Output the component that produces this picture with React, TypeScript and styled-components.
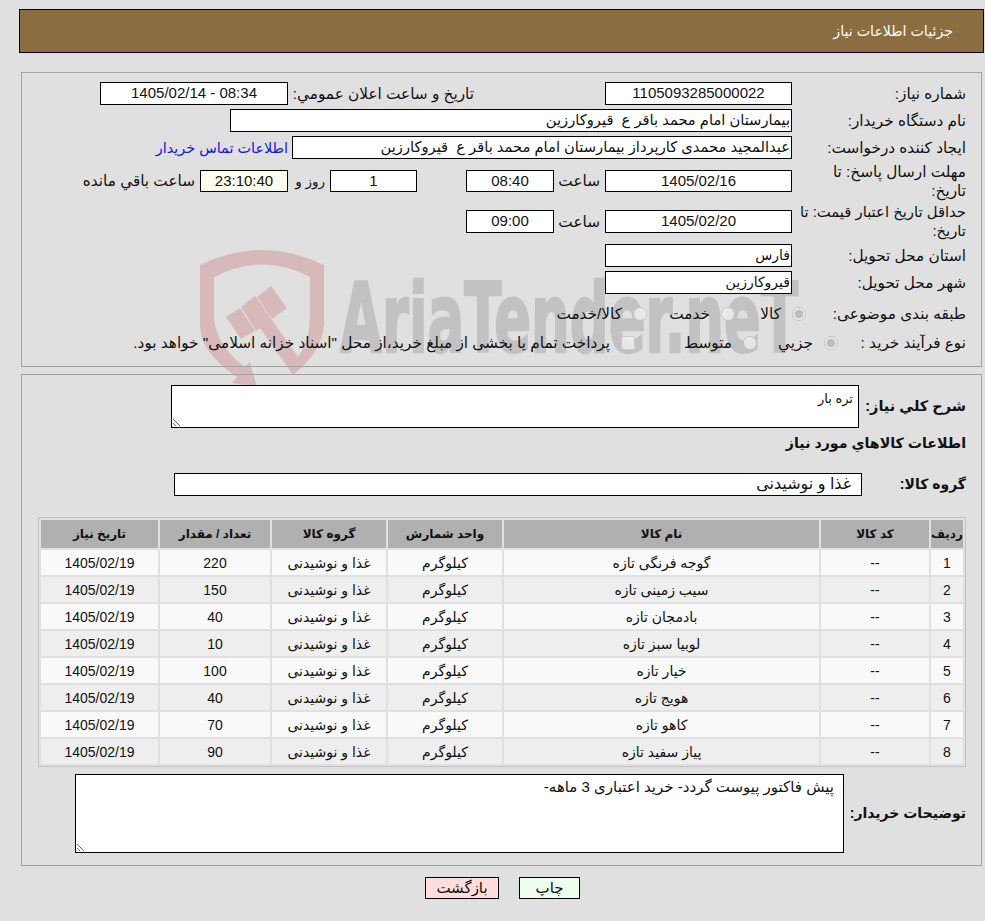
import React from "react";
import styled, { createGlobalStyle } from "styled-components";

const FONT = `"Liberation Sans", "DejaVu Sans", sans-serif`;

const Global = createGlobalStyle`
  html, body { margin: 0; padding: 0; background: #e0e0e0; }
  body { font-family: ${FONT}; font-size: 15.3px; color: #111; overflow: hidden; }
`;

const Page = styled.div`
  position: relative;
  direction: rtl;
  width: 985px;
  height: 921px;
  box-sizing: border-box;
  padding: 9px 1px 0 19px;
`;

const Watermark = styled.svg`
  position: absolute;
  left: 190px;
  top: 240px;
  width: 640px;
  height: 150px;
  z-index: 0;
  direction: ltr;
`;

const Layer = styled.div`
  position: relative;
  z-index: 1;
`;

const Header = styled.header`
  height: 44px;
  box-sizing: border-box;
  border: 1px solid #000;
  background: #8c6d42;
  color: #fff;
  display: flex;
  align-items: center;
  padding-right: 30px;
  font-size: 14.2px;
`;

const Panel = styled.section<{ $top: number }>`
  margin: ${(p) => p.$top}px 2px 0;
  border: 1px solid #a3a3a3;
  padding: ${(p) => (p.$top > 10 ? 9 : 10)}px 0 12px;
`;

const Row = styled.div<{ $h?: number; $gap?: number }>`
  display: flex;
  align-items: center;
  height: ${(p) => p.$h ?? 23}px;
  margin-top: ${(p) => p.$gap ?? 0}px;
`;

const Label = styled.div<{ $w?: number; $size?: number }>`
  flex: none;
  box-sizing: border-box;
  width: ${(p) => p.$w ?? 189}px;
  padding-right: 15px;
  font-size: ${(p) => p.$size ?? 15.3}px;
  line-height: 19px;
  white-space: nowrap;
`;

const BoldLabel = styled(Label)`
  font-size: ${(p) => p.$size ?? 14}px;
  font-weight: 700;
`;

const Field = styled.div<{ $w: number; $center?: boolean; $tint?: boolean; $size?: number }>`
  flex: none;
  box-sizing: border-box;
  width: ${(p) => p.$w}px;
  height: 100%;
  border: 1px solid #000;
  background: ${(p) => (p.$tint ? "#ffffee" : "#fff")};
  font-size: ${(p) => p.$size ?? 14.7}px;
  text-align: ${(p) => (p.$center ? "center" : "right")};
  padding: 0 1px;
  line-height: 20px;
  white-space: pre;
  overflow: hidden;
`;

const Num = styled.span`
  font-size: 15px;
`;

const Side = styled.div<{ $w?: number; $pad?: number; $size?: number }>`
  flex: none;
  box-sizing: border-box;
  width: ${(p) => (p.$w ? `${p.$w}px` : "auto")};
  padding-right: ${(p) => p.$pad ?? 0}px;
  font-size: ${(p) => p.$size ?? 15.3}px;
  white-space: nowrap;
`;

const Link = styled.a`
  color: #1212ee;
  font-size: 14.4px;
  text-decoration: none;
  margin-right: 4px;
  white-space: nowrap;
`;

const Option = styled.label<{ $w: number }>`
  flex: none;
  width: ${(p) => p.$w}px;
  display: flex;
  align-items: center;
  gap: 11px;
  white-space: nowrap;
`;

const Radio = styled.span<{ $on?: boolean }>`
  flex: none;
  box-sizing: border-box;
  width: 14px;
  height: 14px;
  border-radius: 50%;
  border: 1px solid #c4c4c4;
  background: ${(p) =>
    p.$on
      ? "radial-gradient(circle, #bdbdbd 0 4px, rgba(238,238,238,.8) 4.6px)"
      : "rgba(240,240,240,.8)"};
`;

const Check = styled.span`
  flex: none;
  box-sizing: border-box;
  width: 14px;
  height: 14px;
  border-radius: 2px;
  border: 1px solid #c8c8c8;
  background: rgba(240, 240, 240, 0.8);
  margin-left: 11px;
`;

const Memo = styled.div<{ $w: number; $pad: number; $size: number; $top: number }>`
  flex: none;
  box-sizing: border-box;
  width: ${(p) => p.$w}px;
  height: 100%;
  border: 1px solid #000;
  background: #fff;
  padding: ${(p) => p.$top}px ${(p) => p.$pad}px 0 0;
  font-size: ${(p) => p.$size}px;
  line-height: 18px;
  overflow: auto;
  resize: both;
`;

const Table = styled.table`
  width: 928px;
  margin: 21px 15px 0 0;
  box-sizing: border-box;
  border: 1px solid #c2c2c2;
  border-collapse: separate;
  border-spacing: 2px;
  table-layout: fixed;
  font-size: 14px;
`;

const Th = styled.th<{ $w: number }>`
  width: ${(p) => p.$w}px;
  height: 28px;
  padding: 0;
  background: #b0b0b0;
  font-size: 12px;
  font-weight: 700;
  text-align: center;
  white-space: nowrap;
`;

const Tr = styled.tr<{ $alt: boolean }>`
  background: ${(p) => (p.$alt ? "#eeeeee" : "#f9f9f9")};
`;

const Td = styled.td`
  height: 25px;
  padding: 0;
  text-align: center;
  white-space: nowrap;
`;

const Actions = styled.div`
  display: flex;
  justify-content: center;
  gap: 20px;
  margin-top: 11px;
  padding-left: 2px;
`;

const Btn = styled.button<{ $w: number; $bg: string }>`
  box-sizing: border-box;
  width: ${(p) => p.$w}px;
  height: 22px;
  padding: 0;
  border: 1px solid #000;
  background: ${(p) => p.$bg};
  color: #111;
  font-family: ${FONT};
  font-size: 15px;
`;

const cols = [32, 108, 315, 114, 114, 110, 117];
const heads = ["ردیف", "کد کالا", "نام کالا", "واحد شمارش", "گروه کالا", "تعداد / مقدار", "تاریخ نیاز"];
const items: [string, number][] = [
  ["گوجه فرنگی تازه", 220],
  ["سیب زمینی تازه", 150],
  ["بادمجان تازه", 40],
  ["لوبیا سبز تازه", 10],
  ["خیار تازه", 100],
  ["هویج تازه", 40],
  ["کاهو تازه", 70],
  ["پیاز سفید تازه", 90],
];

export default function App() {
  return (
    <Page>
      <Global />
      <Watermark viewBox="190 240 640 150" aria-hidden="true">
        <g fill="#d8b9b9">
          <path d="M200 265Q262 235 324 265V325Q322 352 293 375L260 328 272 320 298 357Q310 340 310 318V277Q262 252 214 277V318Q216 345 245 367L250 362 257 387 232 383 237 377Q200 352 200 325Z" />
          <path d="M271 286 287 308 272 319 257 297Z" />
          <path d="M255 296 272 320 256 331 241 307Z" />
          <path d="M240 308 255 331 241 339 226 317Z" />
        </g>
        <text
          x="340"
          y="352"
          fill="#c2c2c2"
          stroke="#c2c2c2"
          strokeWidth="2.5"
          fontFamily="'DejaVu Sans'"
          fontWeight="700"
          fontSize="96"
          textLength="458"
          lengthAdjust="spacingAndGlyphs"
        >
          AriaTender.neT
        </text>
      </Watermark>
      <Layer>
        <Header>جزئیات اطلاعات نیاز</Header>

        <Panel $top={19}>
          <Row>
            <Label>شماره نیاز:</Label>
            <Field $w={187} $center><Num>1105093285000022</Num></Field>
            <Side $w={317} $pad={131}>تاریخ و ساعت اعلان عمومي:</Side>
            <Field $w={188} $center><Num>08:34 - 1405/02/14</Num></Field>
          </Row>
          <Row $gap={4}>
            <Label>نام دستگاه خریدار:</Label>
            <Field $w={562}>{"بیمارستان امام محمد باقر ع  قیروکارزین"}</Field>
          </Row>
          <Row $gap={4}>
            <Label>ایجاد کننده درخواست:</Label>
            <Field $w={500}>{"عبدالمجید محمدی کارپرداز بیمارستان امام محمد باقر ع  قیروکارزین"}</Field>
            <Link href="#">اطلاعات تماس خریدار</Link>
          </Row>
          <Row $h={22} $gap={11}>
            <Label>مهلت ارسال پاسخ: تا<br />تاریخ:</Label>
            <Field $w={187} $center><Num>1405/02/16</Num></Field>
            <Side $w={51} $pad={5}>ساعت</Side>
            <Field $w={88} $center><Num>08:40</Num></Field>
            <Side $w={49} />
            <Field $w={87} $center><Num>1</Num></Field>
            <Side $w={42} $pad={5} $size={13.5}>روز و</Side>
            <Field $w={88} $center $tint><Num>23:10:40</Num></Field>
            <Side $pad={5}>ساعت باقي مانده</Side>
          </Row>
          <Row $gap={18}>
            <Label $size={14.8}>حداقل تاریخ اعتبار قیمت: تا<br />تاریخ:</Label>
            <Field $w={187} $center><Num>1405/02/20</Num></Field>
            <Side $w={51} $pad={5}>ساعت</Side>
            <Field $w={88} $center><Num>09:00</Num></Field>
          </Row>
          <Row $gap={11}>
            <Label>استان محل تحویل:</Label>
            <Field $w={187} $size={14}>فارس</Field>
          </Row>
          <Row $gap={4}>
            <Label>شهر محل تحویل:</Label>
            <Field $w={187} $size={14}>قیروکارزین</Field>
          </Row>
          <Row $gap={8}>
            <Label $w={175}>طبقه بندی موضوعی:</Label>
            <Option $w={71}><Radio $on />کالا</Option>
            <Option $w={88}><Radio />خدمت</Option>
            <Option $w={90}><Radio />کالا/خدمت</Option>
          </Row>
          <Row $gap={6}>
            <Label $w={143}>نوع فرآیند خرید :</Label>
            <Option $w={81}><Radio $on />جزيي</Option>
            <Option $w={122}><Radio />متوسط</Option>
            <Check />
            <Side>پرداخت تمام یا بخشی از مبلغ خرید،از محل "اسناد خزانه اسلامی" خواهد بود.</Side>
          </Row>
        </Panel>

        <Panel $top={7}>
          <Row $h={43}>
            <BoldLabel $w={122} $size={14.5}>شرح کلي نياز:</BoldLabel>
            <Memo $w={688} $pad={5} $size={13} $top={4}>تره بار</Memo>
          </Row>
          <Row $h={20} $gap={5}>
            <BoldLabel $w={400} $size={14.2}>اطلاعات کالاهاي مورد نياز</BoldLabel>
          </Row>
          <Row $gap={20}>
            <BoldLabel $w={119}>گروه کالا:</BoldLabel>
            <Field $w={688} $size={16}>{"  غذا و نوشیدنی"}</Field>
          </Row>
          <Table>
            <thead>
              <tr>
                {heads.map((h, i) => (
                  <Th key={h} $w={cols[i]}>{h}</Th>
                ))}
              </tr>
            </thead>
            <tbody>
              {items.map(([name, qty], i) => (
                <Tr key={name} $alt={i % 2 === 1}>
                  <Td>{i + 1}</Td>
                  <Td>--</Td>
                  <Td>{name}</Td>
                  <Td>کیلوگرم</Td>
                  <Td>غذا و نوشیدنی</Td>
                  <Td>{qty}</Td>
                  <Td>1405/02/19</Td>
                </Tr>
              ))}
            </tbody>
          </Table>
          <Row $h={79} $gap={7}>
            <BoldLabel $w={137}>توضیحات خریدار:</BoldLabel>
            <Memo $w={769} $pad={9} $size={15} $top={3}>پیش فاکتور پیوست گردد- خرید اعتباری 3 ماهه-</Memo>
          </Row>
        </Panel>

        <Actions>
          <Btn $w={61} $bg="#eeffee">چاپ</Btn>
          <Btn $w={74} $bg="#ffdddd">بازگشت</Btn>
        </Actions>
      </Layer>
    </Page>
  );
}
